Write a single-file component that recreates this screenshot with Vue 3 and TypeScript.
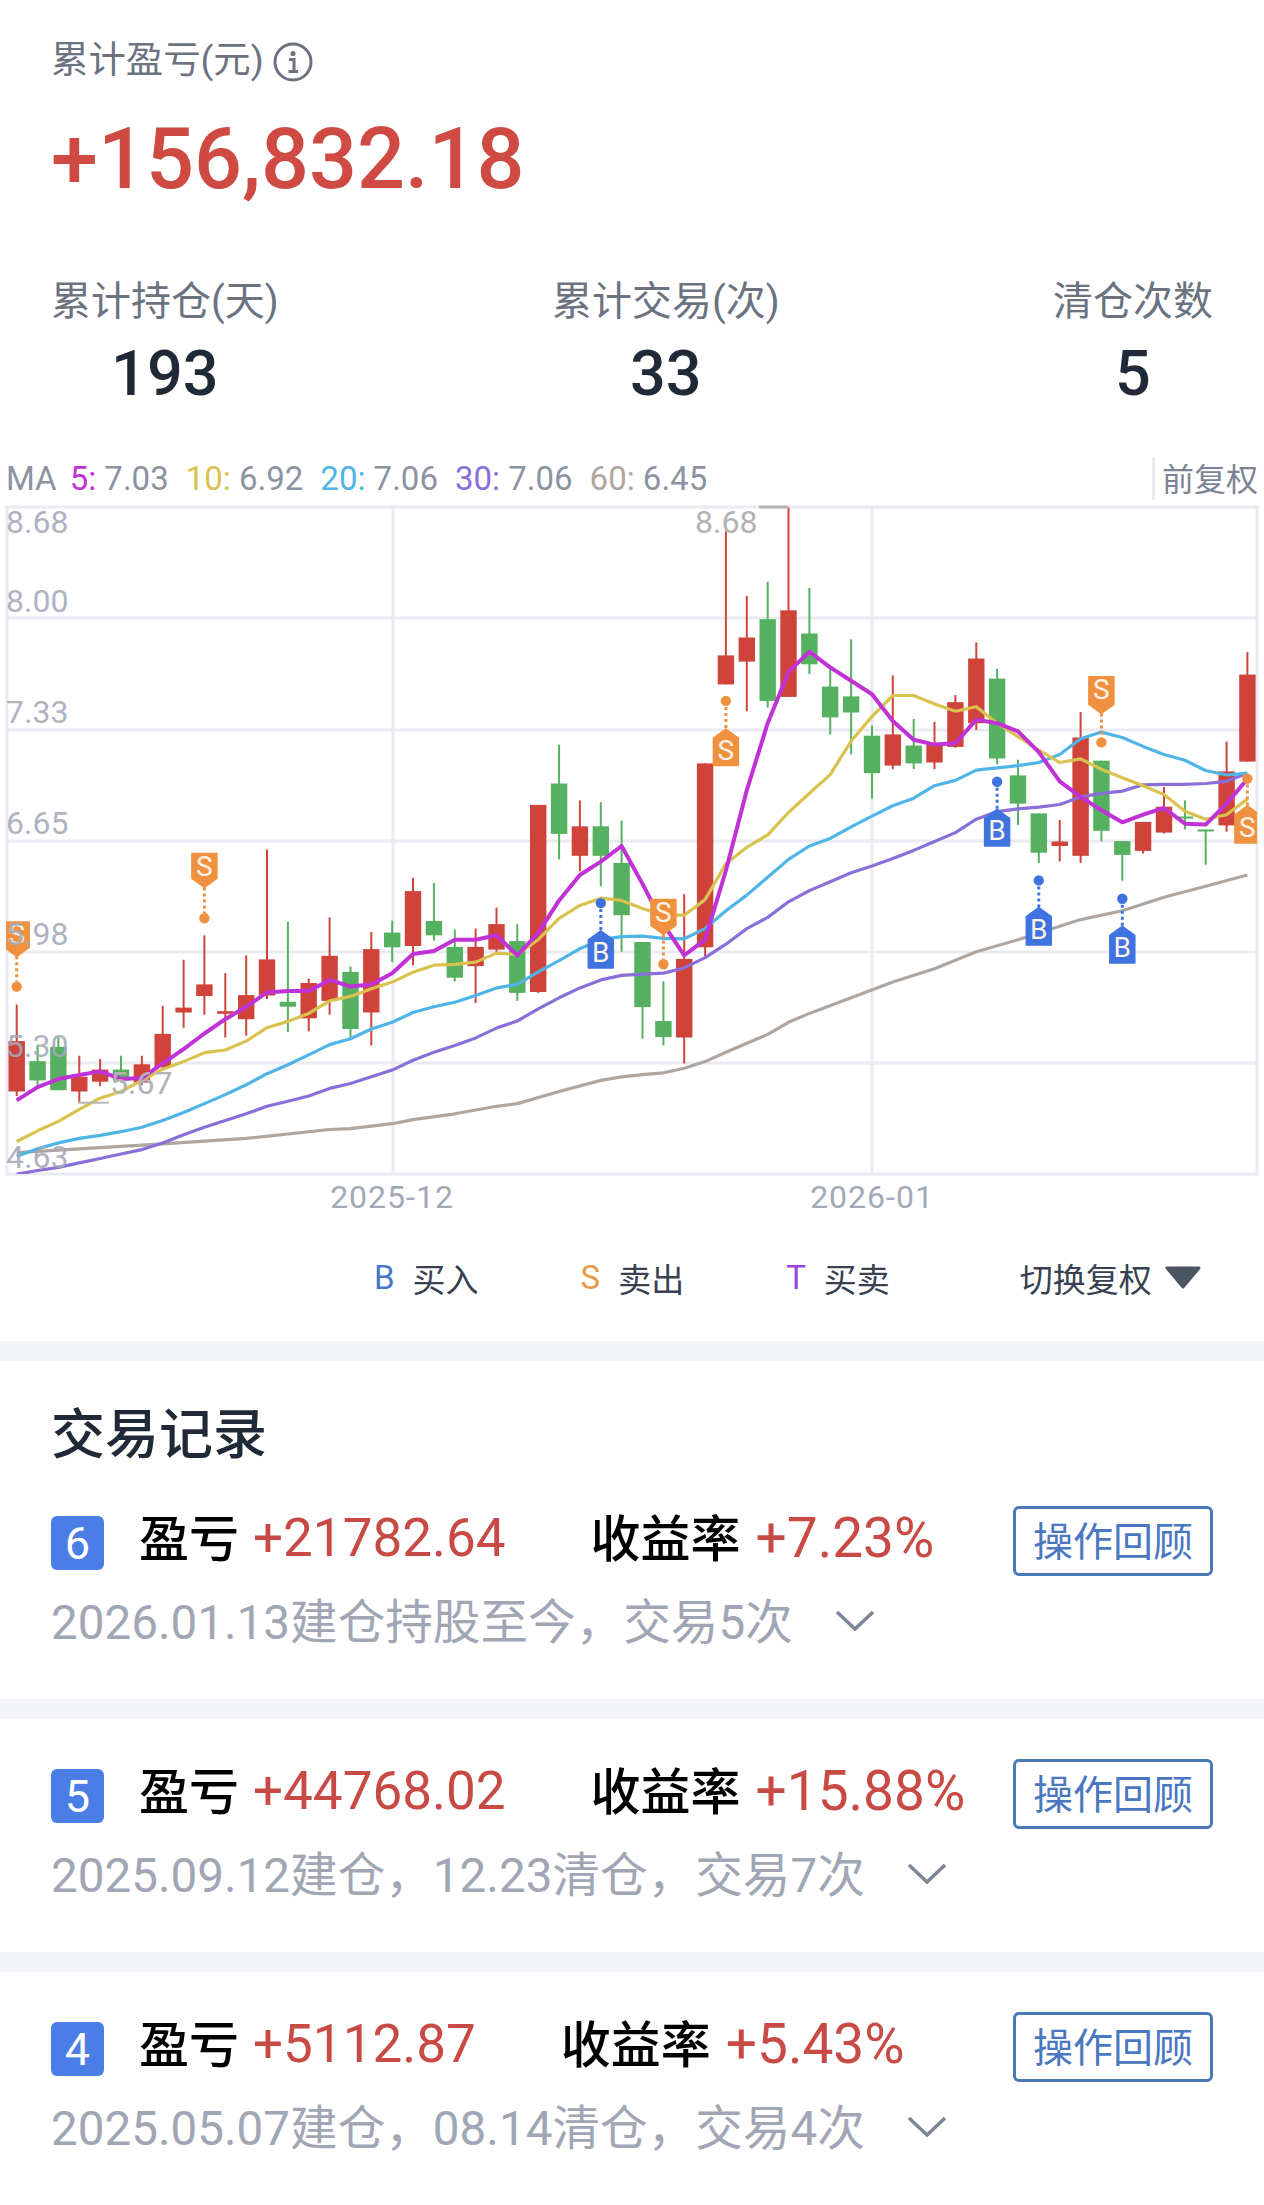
<script setup lang="ts">
// chart data was read off the picture: y values are in "u", 2.24u = 1px, measured from y=500
type Candle = [number, number, number, number, 'r' | 'g']
type Mark = { i: number; kind: 'S' | 'B'; up: boolean; dot: number; top: number; bottom: number }

const toY = (u: number) => +(500 + u / 2.24).toFixed(1)
const toX = (i: number) => +(16.7 + i * 20.86).toFixed(1)

const raw: Candle[] = [
  [1212, 1325, 1130, 1335, 'r'], [1257, 1300, 1220, 1315, 'g'], [1225, 1322, 1200, 1322, 'g'], [1292, 1325, 1245, 1348, 'r'],
  [1276, 1303, 1252, 1313, 'r'], [1276, 1300, 1245, 1305, 'g'], [1264, 1305, 1245, 1310, 'r'], [1196, 1270, 1133, 1275, 'r'],
  [1137, 1148, 1030, 1182, 'r'], [1085, 1111, 975, 1153, 'r'], [1145, 1151, 1060, 1204, 'r'], [1109, 1163, 1020, 1200, 'r'],
  [1029, 1110, 783, 1118, 'r'], [1124, 1135, 945, 1192, 'g'], [1082, 1161, 1072, 1190, 'r'], [1021, 1122, 935, 1153, 'r'],
  [1057, 1185, 1045, 1207, 'g'], [1006, 1148, 968, 1222, 'r'], [969, 1002, 942, 1035, 'g'], [876, 999, 846, 1042, 'r'],
  [943, 975, 858, 987, 'g'], [1001, 1070, 962, 1078, 'g'], [1001, 1044, 960, 1127, 'r'], [950, 1007, 913, 1015, 'r'],
  [988, 1104, 950, 1122, 'g'], [683, 1102, 683, 1104, 'r'], [635, 748, 548, 805, 'g'], [731, 797, 673, 832, 'r'],
  [731, 797, 677, 865, 'g'], [813, 930, 718, 1012, 'g'], [990, 1136, 990, 1207, 'g'], [1167, 1203, 1078, 1222, 'g'],
  [1028, 1204, 883, 1262, 'r'], [590, 1002, 590, 1022, 'r'], [348, 413, 70, 413, 'r'], [308, 362, 215, 473, 'r'],
  [267, 450, 183, 465, 'g'], [247, 441, 17, 441, 'r'], [299, 368, 197, 390, 'g'], [418, 487, 375, 525, 'g'],
  [440, 476, 312, 570, 'g'], [528, 612, 505, 670, 'g'], [525, 595, 393, 603, 'r'], [550, 590, 490, 603, 'g'],
  [548, 588, 497, 603, 'r'], [453, 553, 437, 555, 'r'], [355, 500, 319, 515, 'r'], [400, 579, 378, 592, 'g'],
  [617, 680, 582, 728, 'g'], [702, 790, 702, 813, 'g'], [765, 775, 717, 810, 'r'], [532, 797, 475, 813, 'r'],
  [584, 741, 584, 765, 'g'], [764, 795, 764, 853, 'g'], [721, 786, 721, 792, 'r'], [687, 745, 643, 747, 'r'],
  [709, 711, 673, 738, 'g'], [738, 741, 738, 817, 'g'], [608, 729, 541, 743, 'r'], [391, 586, 341, 586, 'r'],
]

const candles = raw.map(([top, bottom, hi, lo, c], i) => ({
  x: toX(i),
  top: toY(top),
  h: Math.max(toY(bottom) - toY(top), 2),
  hi: toY(hi),
  lo: toY(lo),
  color: c === 'r' ? '#d0433a' : '#55b15f',
}))

const linePath = (ys: number[]) => ys.map((y, i) => `${i ? 'L' : 'M'}${toX(i)} ${toY(y)}`).join(' ')

const ma5 = [1345, 1315, 1297, 1288, 1280, 1297, 1295, 1262, 1230, 1195, 1163, 1135, 1103, 1100, 1100, 1075, 1090, 1085, 1060, 1017, 1010, 985, 985, 975, 1020, 970, 897, 840, 810, 775, 860, 950, 1020, 985, 830, 650, 500, 385, 340, 375, 405, 435, 495, 537, 548, 545, 492, 500, 518, 565, 630, 665, 695, 722, 705, 690, 725, 727, 680, 625]
const ma10 = [1437, 1413, 1392, 1365, 1340, 1325, 1300, 1275, 1258, 1238, 1232, 1212, 1182, 1168, 1150, 1122, 1112, 1095, 1080, 1058, 1042, 1040, 1035, 1015, 1018, 985, 937, 908, 892, 897, 915, 930, 930, 895, 815, 778, 750, 700, 657, 615, 540, 485, 438, 438, 457, 473, 463, 500, 530, 560, 588, 580, 603, 622, 640, 660, 697, 715, 705, 670]
const ma20 = [1470, 1453, 1440, 1430, 1423, 1415, 1405, 1390, 1372, 1352, 1332, 1310, 1285, 1265, 1243, 1220, 1207, 1185, 1170, 1148, 1135, 1125, 1110, 1093, 1085, 1057, 1032, 1005, 985, 978, 977, 982, 983, 960, 920, 885, 845, 805, 775, 758, 732, 708, 685, 668, 640, 628, 605, 600, 595, 588, 570, 535, 520, 532, 552, 570, 583, 606, 616, 612]
const ma30 = [1510, 1502, 1495, 1485, 1475, 1465, 1455, 1440, 1422, 1405, 1390, 1375, 1358, 1347, 1335, 1318, 1307, 1292, 1277, 1255, 1237, 1222, 1205, 1183, 1167, 1140, 1115, 1093, 1075, 1065, 1062, 1060, 1048, 1025, 995, 960, 935, 900, 875, 855, 835, 820, 803, 785, 765, 745, 715, 698, 692, 688, 682, 665, 657, 652, 638, 637, 637, 635, 630, 612]
const ma60Sparse: [number, number][] = [[0, 1462], [7, 1442], [11, 1430], [15, 1410], [16, 1408], [18, 1397], [19, 1388], [21, 1375], [23, 1358], [24, 1352], [26, 1325], [28, 1300], [29, 1292], [30, 1287], [31, 1283], [32, 1273], [33, 1258], [34, 1237], [36, 1197], [37, 1170], [38, 1150], [40, 1115], [42, 1080], [44, 1050], [46, 1012], [48, 985], [51, 940], [53, 920], [55, 890], [57, 865], [59, 840]]

const lines = [
  { color: '#b0a69f', width: 3.2, d: ma60Sparse.map(([i, y], n) => `${n ? 'L' : 'M'}${toX(i)} ${toY(y)}`).join(' ') },
  { color: '#8a6fd8', width: 3.2, d: linePath(ma30) },
  { color: '#4fb4e6', width: 3.2, d: linePath(ma20) },
  { color: '#d9c24e', width: 3.2, d: linePath(ma10) },
  { color: '#c031d6', width: 4, d: linePath(ma5) },
]

const marks: Mark[] = [
  { i: 0, kind: 'S', up: false, dot: 1090, top: 945, bottom: 1022 },
  { i: 9, kind: 'S', up: false, dot: 937, top: 792, bottom: 868 },
  { i: 28, kind: 'B', up: true, dot: 903, top: 965, bottom: 1048 },
  { i: 31, kind: 'S', up: false, dot: 1040, top: 895, bottom: 973 },
  { i: 34, kind: 'S', up: true, dot: 450, top: 513, bottom: 595 },
  { i: 47, kind: 'B', up: true, dot: 631, top: 693, bottom: 775 },
  { i: 49, kind: 'B', up: true, dot: 852, top: 913, bottom: 997 },
  { i: 52, kind: 'S', up: false, dot: 543, top: 396, bottom: 478 },
  { i: 53, kind: 'B', up: true, dot: 893, top: 955, bottom: 1037 },
  { i: 59, kind: 'S', up: true, dot: 624, top: 685, bottom: 768 },
]

const tags = marks.map((m) => {
  const x = toX(m.i)
  const t = toY(m.top)
  const b = toY(m.bottom)
  const w = 12.5
  const d = m.up
    ? `M${x} ${t} L${x + w} ${t + 9} V${b} H${x - w} V${t + 9} Z`
    : `M${x - w} ${t} H${x + w} V${b - 9} L${x} ${b} L${x - w} ${b - 9} Z`
  return {
    x,
    d,
    kind: m.kind,
    color: m.kind === 'S' ? '#f0913f' : '#3f74e0',
    dotY: toY(m.dot),
    lineFrom: m.up ? toY(m.dot) + 6 : b,
    lineTo: m.up ? t : toY(m.dot) - 5,
    textY: m.up ? b - 6 : t + 22,
  }
})

const gridY = [618, 730, 841, 952, 1063]
const axisLabels = [
  { text: '8.68', y: 532.6 },
  { text: '8.00', y: 611.6 },
  { text: '7.33', y: 722.8 },
  { text: '6.65', y: 834 },
  { text: '5.98', y: 945 },
  { text: '5.30', y: 1056.7 },
  { text: '4.63', y: 1168 },
]

const maItems = [
  { key: '5:', val: '7.03', color: '#c031d6' },
  { key: '10:', val: '6.92', color: '#d9c24e' },
  { key: '20:', val: '7.06', color: '#4fb4e6' },
  { key: '30:', val: '7.06', color: '#8a6fd8' },
  { key: '60:', val: '6.45', color: '#b0a69f' },
]

const stats = [
  { label: '累计持仓(天)', value: '193' },
  { label: '累计交易(次)', value: '33' },
  { label: '清仓次数', value: '5' },
]

const legend = [
  { mark: 'B', color: '#4a78c8', text: '买入' },
  { mark: 'S', color: '#e59a4c', text: '卖出' },
  { mark: 'T', color: '#9a44d8', text: '买卖' },
]

const trades = [
  { no: 6, profit: '+21782.64', rate: '+7.23%', desc: '2026.01.13建仓持股至今，交易5次' },
  { no: 5, profit: '+44768.02', rate: '+15.88%', desc: '2025.09.12建仓，12.23清仓，交易7次' },
  { no: 4, profit: '+5112.87', rate: '+5.43%', desc: '2025.05.07建仓，08.14清仓，交易4次' },
]
</script>

<template>
  <div class="page">
    <section class="summary">
      <div class="total-label">
        <span>累计盈亏(元)</span>
        <svg class="info" viewBox="0 0 40 40" fill="none">
          <circle cx="20" cy="20" r="18" stroke="#6b7280" stroke-width="3" />
          <circle cx="20" cy="11.5" r="2.6" fill="#6b7280" />
          <path d="M16 17.5H21V29M15.5 29.5H25" stroke="#6b7280" stroke-width="3" />
        </svg>
      </div>
      <div class="total-value">+156,832.18</div>
      <div class="stats">
        <div v-for="s in stats" :key="s.label" class="stat">
          <div class="stat-label">{{ s.label }}</div>
          <div class="stat-value">{{ s.value }}</div>
        </div>
      </div>
    </section>

    <div class="ma-row">
      <span class="ma-title">MA</span>
      <span v-for="m in maItems" :key="m.key" class="ma-item">
        <span :style="{ color: m.color }">{{ m.key }}</span> {{ m.val }}
      </span>
      <span class="adjust">前复权</span>
    </div>

    <svg class="chart" viewBox="0 500 1264 720" width="1264" height="720">
      <defs>
        <clipPath id="plot"><rect x="6" y="507" width="1251" height="667" /></clipPath>
      </defs>
      <g fill="none" stroke="#e9ebf1" stroke-width="3">
        <rect x="7" y="507" width="1250" height="667" />
        <line v-for="y in gridY" :key="y" x1="7" x2="1257" :y1="y" :y2="y" />
        <line x1="393" x2="393" y1="507" y2="1174" />
        <line x1="872" x2="872" y1="507" y2="1174" />
      </g>
      <g clip-path="url(#plot)">
        <g v-for="(c, i) in candles" :key="i">
          <line :x1="c.x" :x2="c.x" :y1="c.hi" :y2="c.lo" :stroke="c.color" stroke-width="2" />
          <rect :x="c.x - 8.2" :y="c.top" width="16.4" :height="c.h" :fill="c.color" />
        </g>
        <path v-for="l in lines" :key="l.color" :d="l.d" fill="none" :stroke="l.color" :stroke-width="l.width" stroke-linejoin="round" />
        <g v-for="t in tags" :key="t.x">
          <line :x1="t.x" :x2="t.x" :y1="t.lineFrom" :y2="t.lineTo" :stroke="t.color" stroke-width="3" stroke-dasharray="3 3" />
          <circle :cx="t.x" :cy="t.dotY" r="5.2" :fill="t.color" />
          <path :d="t.d" :fill="t.color" :stroke="t.color" stroke-width="1.5" stroke-linejoin="round" />
          <text :x="t.x" :y="t.textY" class="tag-text" text-anchor="middle">{{ t.kind }}</text>
        </g>
      </g>
      <text v-for="a in axisLabels" :key="a.text" x="6" :y="a.y" class="axis-label">{{ a.text }}</text>
      <text x="695" y="532.6" class="peak-label">8.68</text>
      <line x1="759" x2="788" y1="507" y2="507" stroke="#b5b5b5" stroke-width="3" />
      <text x="110" y="1093.7" class="peak-label">5.67</text>
      <line x1="78" x2="109" y1="1102.7" y2="1102.7" stroke="#b5b5b5" stroke-width="2" />
      <text x="392" y="1208" class="date-label" text-anchor="middle">2025-12</text>
      <text x="872" y="1208" class="date-label" text-anchor="middle">2026-01</text>
    </svg>

    <div class="legend">
      <div v-for="l in legend" :key="l.mark" class="legend-item">
        <span class="legend-mark" :style="{ color: l.color }">{{ l.mark }}</span>
        <span>{{ l.text }}</span>
      </div>
      <div class="switch">
        <span>切换复权</span>
        <svg viewBox="0 0 38 23" width="38" height="23">
          <path d="M3 2H35L19 21Z" fill="#4b5563" stroke="#4b5563" stroke-width="3" stroke-linejoin="round" />
        </svg>
      </div>
    </div>

    <section class="records">
      <h2 class="records-title">交易记录</h2>
      <div v-for="t in trades" :key="t.no" class="trade">
        <div class="trade-top">
          <span class="badge">{{ t.no }}</span>
          <div class="trade-text">
            <span class="trade-key">盈亏</span>
            <span class="trade-num">{{ t.profit }}</span>
            <span class="trade-key rate-key">收益率</span>
            <span class="trade-num rate-num">{{ t.rate }}</span>
          </div>
          <button class="review">操作回顾</button>
        </div>
        <div class="trade-sub">
          <span class="trade-desc">{{ t.desc }}</span>
          <svg viewBox="0 0 40 21" width="40" height="21" fill="none">
            <path d="M2 2L20 19L38 2" stroke="#7d8695" stroke-width="3.5" />
          </svg>
        </div>
      </div>
    </section>
  </div>
</template>

<style>
body {
  background: #fff;
}
</style>

<style scoped>
.page {
  width: 1264px;
  height: 2205px;
  overflow: hidden;
  background: #f4f5f9;
  font-family: Roboto, "Noto Sans CJK SC", sans-serif;
}

.summary {
  background: #fff;
  padding: 40px 51px 50px 51px;
}

.total-label {
  display: flex;
  align-items: center;
  gap: 9px;
  height: 40px;
  font-size: 37.4px;
  line-height: 40px;
  color: #6b7280;
}

.info {
  width: 40px;
  height: 40px;
  margin-top: 4px;
}

.total-value {
  margin-top: 30px;
  height: 99px;
  font-size: 84.5px;
  line-height: 100px;
  font-weight: 500;
  color: #cf4a42;
}

.stats {
  display: flex;
  justify-content: space-between;
  margin-top: 68px;
}

.stat {
  text-align: center;
}

.stat-label {
  height: 50px;
  font-size: 40px;
  line-height: 50px;
  color: #6b7280;
}

.stat-value {
  margin-top: 12px;
  height: 68px;
  font-size: 63px;
  line-height: 70px;
  font-weight: 500;
  color: #1f2937;
}

.ma-row {
  display: flex;
  align-items: center;
  gap: 17px;
  height: 43px;
  padding-left: 6px;
  padding-right: 6px;
  background: #fff;
  font-size: 33px;
  color: #8b93a1;
}

.ma-title {
  margin-right: -4px;
}

.adjust {
  margin-left: auto;
  align-self: stretch;
  padding-left: 7px;
  border-left: 3px solid #e9ebf1;
  font-size: 32px;
  line-height: 46px;
  color: #7b8494;
}

.chart {
  display: block;
  background: #fff;
}

.axis-label {
  font-size: 32px;
  fill: #a2a9b7;
  fill-opacity: 0.9;
}

.peak-label {
  font-size: 32px;
  fill: #b2b2b2;
}

.date-label {
  font-size: 32px;
  letter-spacing: 1px;
  fill: #a2a9b7;
}

.tag-text {
  font-size: 28px;
  fill: #fdf3e8;
}

.legend {
  display: flex;
  align-items: center;
  gap: 102px;
  height: 115px;
  padding-left: 374px;
  padding-bottom: 6px;
  background: #fff;
  font-size: 33px;
  color: #374151;
}

.legend-item {
  display: flex;
  align-items: center;
  gap: 18px;
}

.legend-mark {
  font-size: 33px;
}

.switch {
  display: flex;
  align-items: center;
  gap: 12px;
  margin-left: 28px;
}

.records {
  margin-top: 20px;
}

.records-title {
  margin: 0;
  padding: 45px 0 0 51px;
  height: 60px;
  background: #fff;
  font-size: 54px;
  line-height: 60px;
  font-weight: 500;
  color: #1f2937;
}

.trade {
  height: 233px;
  box-sizing: border-box;
  padding: 40px 51px 0 51px;
  margin-bottom: 20px;
  background: #fff;
}

.trade-top {
  display: flex;
  align-items: center;
  height: 70px;
}

.badge {
  display: flex;
  align-items: center;
  justify-content: center;
  width: 53px;
  height: 54px;
  margin-top: 4px;
  border-radius: 6px;
  background: #4a7ee6;
  color: #fff;
  font-size: 45px;
}

.trade-text {
  display: flex;
  align-items: center;
  margin-left: 35px;
  padding-bottom: 6px;
}

.trade-key {
  margin-bottom: 6px;
  font-size: 50px;
  font-weight: 500;
  color: #000;
}

.trade-num {
  margin-left: 14px;
  font-size: 53px;
  color: #c84a45;
}

.rate-key {
  margin-left: 85px;
}

.rate-num {
  margin-left: 15px;
  font-size: 55px;
}

.review {
  margin-left: auto;
  width: 200px;
  height: 70px;
  padding: 0 0 4px;
  border: 3px solid #4a78b8;
  border-radius: 6px;
  background: #fff;
  color: #4a78c0;
  font-family: inherit;
  font-size: 40px;
}

.trade-sub {
  display: flex;
  align-items: center;
  gap: 42px;
  height: 60px;
  margin-top: 16px;
  font-size: 47.6px;
  color: #a0a6b4;
}

.trade-desc {
  margin-bottom: 7px;
}

.trade-sub svg {
  margin-bottom: 3px;
}
</style>
